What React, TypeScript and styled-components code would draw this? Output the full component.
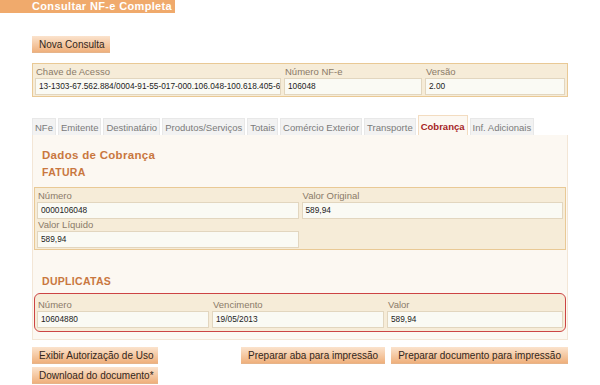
import styled, { createGlobalStyle } from 'styled-components';

const GlobalStyle = createGlobalStyle`
  body {
    margin: 0;
    background: #ffffff;
    font-family: 'Liberation Sans', Arial, sans-serif;
  }
`;

const Page = styled.div`
  width: 600px;
  height: 385px;
  overflow: hidden;
  box-sizing: border-box;
  border-left: 9px dotted #f2f2f2;
  margin-left: -9px;
`;

const TitleBar = styled.div`
  width: max-content;
  height: 13px;
  padding: 0 3px 0 32px;
  background: #f0aa6c;
  color: #ffffff;
  font-weight: bold;
  font-size: 11px;
  line-height: 13px;
  letter-spacing: 0.35px;
  white-space: nowrap;
`;

const Content = styled.div`
  padding: 23px 32px 0 32px;
  width: 536px;
`;

const Button = styled.button<{ $width?: number }>`
  display: block;
  height: 17px;
  width: ${(p) => (p.$width ? `${p.$width}px` : 'auto')};
  padding: 0 7px;
  border: none;
  border-bottom: 1px solid #e6b48a;
  background: linear-gradient(#fbe3cd, #efb07c);
  color: #33261a;
  font-family: 'Liberation Sans', Arial, sans-serif;
  font-size: 10px;
  text-align: center;
  white-space: nowrap;
  cursor: pointer;
`;

const FieldBox = styled.div<{ $cols: string; $alert?: boolean }>`
  display: grid;
  grid-template-columns: ${(p) => p.$cols};
  column-gap: 3px;
  row-gap: 0;
  padding: ${(p) => (p.$alert ? '5px 2px 3px 2px' : '2px 2px 1px 2px')};
  background: #f6ecd8;
  border: ${(p) => (p.$alert ? '1.5px solid #cc4444' : '1.5px solid #e9c995')};
  border-radius: ${(p) => (p.$alert ? '6px' : '0')};
`;

const Field = styled.div`
  display: flex;
  flex-direction: column;
`;

const Label = styled.span`
  height: 12px;
  line-height: 12px;
  font-size: 9.5px;
  color: #8a7a68;
  padding-left: 1px;
`;

const Value = styled.div`
  height: 15px;
  line-height: 15px;
  padding-left: 3px;
  background: #fafaf4;
  border: 1px solid #e2d6bf;
  font-size: 8.3px;
  color: #222;
  white-space: nowrap;
  overflow: hidden;
`;

const Tabs = styled.div`
  display: flex;
  align-items: flex-end;
  gap: 2px;
  margin-top: 18px;
  height: 20px;
`;

const Tab = styled.div<{ $active?: boolean }>`
  height: ${(p) => (p.$active ? '20px' : '17px')};
  line-height: ${(p) => (p.$active ? '22px' : '17px')};
  padding: 0 2px;
  box-sizing: border-box;
  font-size: 9.5px;
  white-space: nowrap;
  color: ${(p) => (p.$active ? '#a52424' : '#7a7a7a')};
  font-weight: ${(p) => (p.$active ? 'bold' : 'normal')};
  background: ${(p) => (p.$active ? '#fcf8f2' : '#f2f2f2')};
  border: 1px solid ${(p) => (p.$active ? '#f3dcc0' : '#e8e8e8')};
  border-bottom: none;
`;

const Panel = styled.div`
  height: 205px;
  padding: 13px 1px 0 1px;
  background: #fcf8f2;
  border: 1px solid #f3e6d6;
  border-top: none;
  box-sizing: border-box;
`;

const Heading = styled.div<{ $big?: boolean; $after?: number }>`
  padding-left: 8px;
  color: #c9773f;
  font-weight: bold;
  font-size: ${(p) => (p.$big ? '11.5px' : '10.5px')};
  letter-spacing: 0.3px;
  line-height: 14px;
  margin-bottom: ${(p) => p.$after ?? 3}px;
`;

const Spacer = styled.div<{ $h: number }>`
  height: ${(p) => p.$h}px;
`;

const Footer = styled.div`
  display: flex;
  margin-top: 7px;
`;

const ButtonStack = styled.div`
  display: flex;
  flex-direction: column;
  gap: 3px;
`;

const ButtonRow = styled.div`
  display: flex;
  gap: 6px;
  margin-left: auto;
  align-self: flex-start;
`;

const tabs = [
  'NFe',
  'Emitente',
  'Destinatário',
  'Produtos/Serviços',
  'Totais',
  'Comércio Exterior',
  'Transporte',
  'Cobrança',
  'Inf. Adicionais',
];

const App = () => (
  <>
    <GlobalStyle />
    <Page>
      <TitleBar>Consultar NF-e Completa</TitleBar>
      <Content>
        <Button $width={78}>Nova Consulta</Button>
        <Spacer $h={10} />
        <FieldBox $cols="246px 138px 1fr">
          <Field>
            <Label>Chave de Acesso</Label>
            <Value>13-1303-67.562.884/0004-91-55-017-000.106.048-100.618.405-6</Value>
          </Field>
          <Field>
            <Label>Número NF-e</Label>
            <Value>106048</Value>
          </Field>
          <Field>
            <Label>Versão</Label>
            <Value>2.00</Value>
          </Field>
        </FieldBox>
        <Tabs>
          {tabs.map((t) => (
            <Tab key={t} $active={t === 'Cobrança'}>
              {t}
            </Tab>
          ))}
        </Tabs>
        <Panel>
          <Heading $big>Dados de Cobrança</Heading>
          <Heading $after={8}>FATURA</Heading>
          <FieldBox $cols="1fr 1fr">
            <Field>
              <Label>Número</Label>
              <Value>0000106048</Value>
            </Field>
            <Field>
              <Label>Valor Original</Label>
              <Value>589,94</Value>
            </Field>
            <Field>
              <Label>Valor Líquido</Label>
              <Value>589,94</Value>
            </Field>
          </FieldBox>
          <Spacer $h={24} />
          <Heading $after={5}>DUPLICATAS</Heading>
          <FieldBox $cols="172px 172px 1fr" $alert>
            <Field>
              <Label>Número</Label>
              <Value>10604880</Value>
            </Field>
            <Field>
              <Label>Vencimento</Label>
              <Value>19/05/2013</Value>
            </Field>
            <Field>
              <Label>Valor</Label>
              <Value>589,94</Value>
            </Field>
          </FieldBox>
        </Panel>
        <Footer>
          <ButtonStack>
            <Button $width={126}>Exibir Autorização de Uso</Button>
            <Button $width={126}>Download do documento*</Button>
          </ButtonStack>
          <ButtonRow>
            <Button>Preparar aba para impressão</Button>
            <Button>Preparar documento para impressão</Button>
          </ButtonRow>
        </Footer>
      </Content>
    </Page>
  </>
);

export default App;
